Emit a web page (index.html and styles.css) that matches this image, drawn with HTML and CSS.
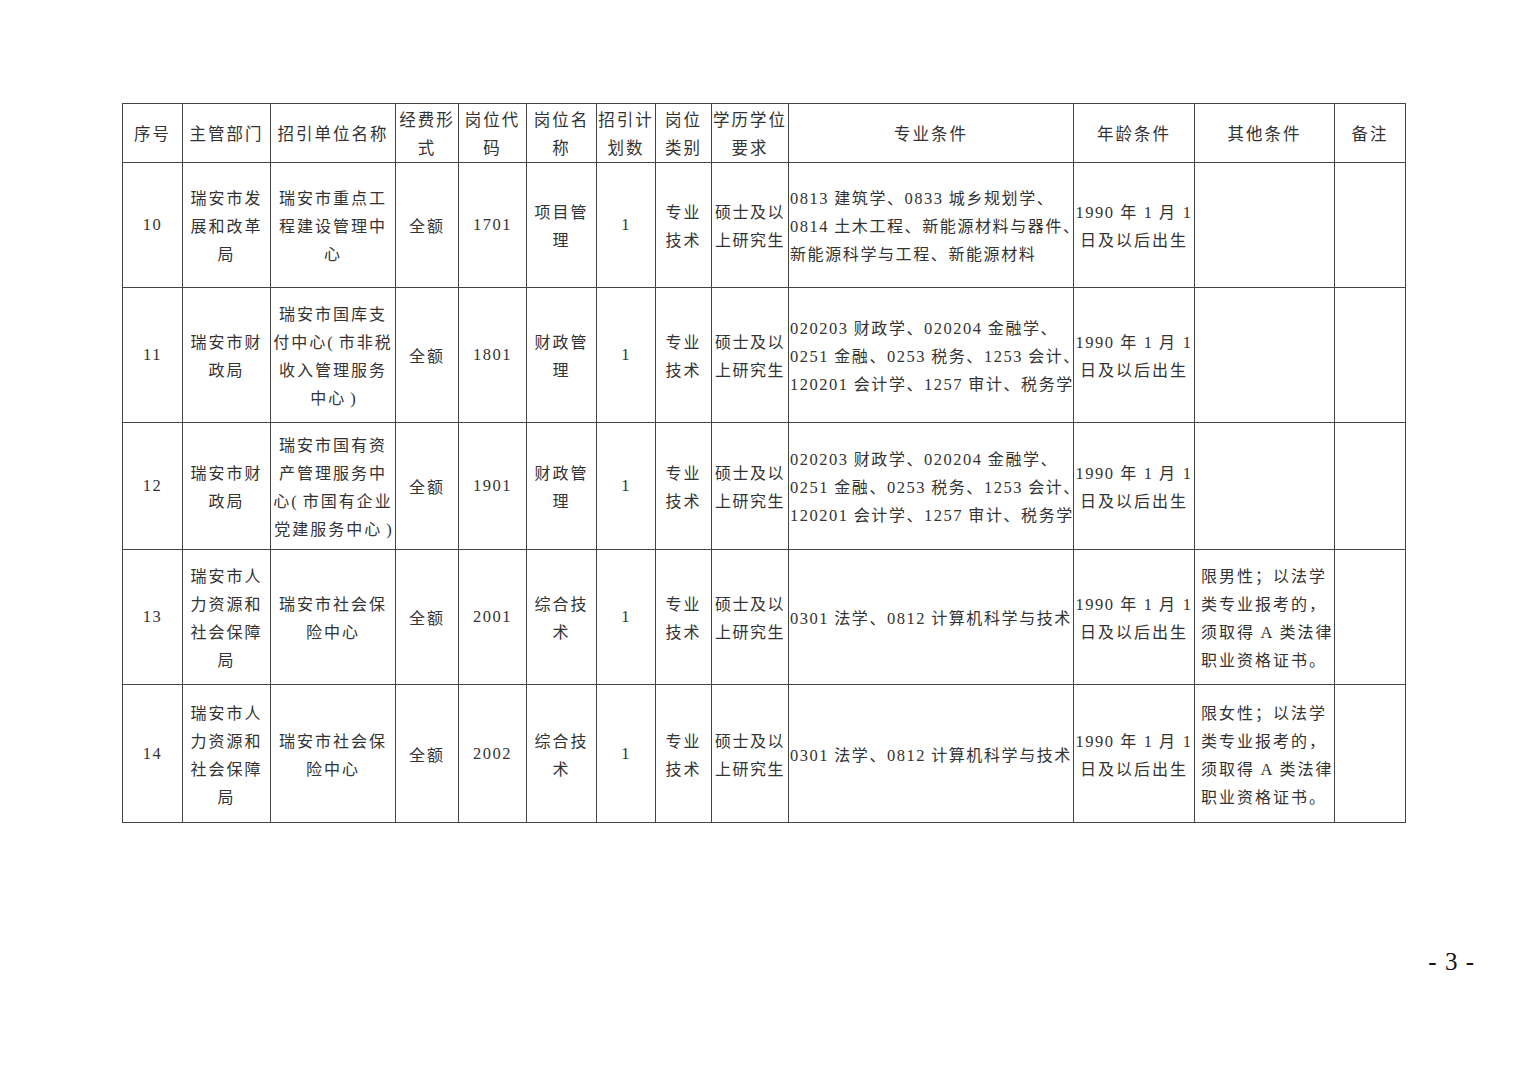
FILE: index.html
```html
<!DOCTYPE html>
<html lang="zh-CN">
<head>
<meta charset="utf-8">
<title>招聘岗位表</title>
<link rel="stylesheet" href="styles.css">
</head>
<body>
<div class="page">
<table class="jobs">
<colgroup>
<col class="c1"><col class="c2"><col class="c3"><col class="c4"><col class="c5"><col class="c6"><col class="c7"><col class="c8"><col class="c9"><col class="c10"><col class="c11"><col class="c12"><col class="c13">
</colgroup>
<thead>
<tr class="hrow">
<th>序号</th><th>主管部门</th><th>招引单位名称</th><th>经费形<br>式</th><th>岗位代<br>码</th><th>岗位名<br>称</th><th>招引计<br>划数</th><th>岗位<br>类别</th><th>学历学位<br>要求</th><th>专业条件</th><th>年龄条件</th><th>其他条件</th><th>备注</th>
</tr>
</thead>
<tbody>
<tr class="r1">
<td class="num">10</td>
<td>瑞安市发<br>展和改革<br>局</td>
<td>瑞安市重点工<br>程建设管理中<br>心</td>
<td>全额</td>
<td class="num">1701</td>
<td>项目管<br>理</td>
<td class="num">1</td>
<td>专业<br>技术</td>
<td class="edu">硕士及以<br>上研究生</td>
<td class="major"><span class="n">0813</span> 建筑学、<span class="n">0833</span> 城乡规划学、<br><span class="n">0814</span> 土木工程、新能源材料与器件、<br>新能源科学与工程、新能源材料</td>
<td class="age"><span class="n">1990</span> 年 <span class="n">1</span> 月 <span class="n">1</span><br>日及以后出生</td>
<td class="other"></td>
<td></td>
</tr>
<tr class="r2">
<td class="num">11</td>
<td>瑞安市财<br>政局</td>
<td>瑞安市国库支<br>付中心<span class="p">(</span>市非税<br>收入管理服务<br>中心<span class="p pr">)</span></td>
<td>全额</td>
<td class="num">1801</td>
<td>财政管<br>理</td>
<td class="num">1</td>
<td>专业<br>技术</td>
<td class="edu">硕士及以<br>上研究生</td>
<td class="major"><span class="n">020203</span> 财政学、<span class="n">020204</span> 金融学、<br><span class="n">0251</span> 金融、<span class="n">0253</span> 税务、<span class="n">1253</span> 会计、<br><span class="n">120201</span> 会计学、<span class="n">1257</span> 审计、税务学</td>
<td class="age"><span class="n">1990</span> 年 <span class="n">1</span> 月 <span class="n">1</span><br>日及以后出生</td>
<td class="other"></td>
<td></td>
</tr>
<tr class="r3">
<td class="num">12</td>
<td>瑞安市财<br>政局</td>
<td>瑞安市国有资<br>产管理服务中<br>心<span class="p">(</span>市国有企业<br>党建服务中心<span class="p pr">)</span></td>
<td>全额</td>
<td class="num">1901</td>
<td>财政管<br>理</td>
<td class="num">1</td>
<td>专业<br>技术</td>
<td class="edu">硕士及以<br>上研究生</td>
<td class="major"><span class="n">020203</span> 财政学、<span class="n">020204</span> 金融学、<br><span class="n">0251</span> 金融、<span class="n">0253</span> 税务、<span class="n">1253</span> 会计、<br><span class="n">120201</span> 会计学、<span class="n">1257</span> 审计、税务学</td>
<td class="age"><span class="n">1990</span> 年 <span class="n">1</span> 月 <span class="n">1</span><br>日及以后出生</td>
<td class="other"></td>
<td></td>
</tr>
<tr class="r4">
<td class="num">13</td>
<td>瑞安市人<br>力资源和<br>社会保障<br>局</td>
<td>瑞安市社会保<br>险中心</td>
<td>全额</td>
<td class="num">2001</td>
<td>综合技<br>术</td>
<td class="num">1</td>
<td>专业<br>技术</td>
<td class="edu">硕士及以<br>上研究生</td>
<td class="major"><span class="n">0301</span> 法学、<span class="n">0812</span> 计算机科学与技术</td>
<td class="age"><span class="n">1990</span> 年 <span class="n">1</span> 月 <span class="n">1</span><br>日及以后出生</td>
<td class="other">限男性；以法学<br>类专业报考的，<br>须取得 <span class="n">A</span> 类法律<br>职业资格证书。</td>
<td></td>
</tr>
<tr class="r5">
<td class="num">14</td>
<td>瑞安市人<br>力资源和<br>社会保障<br>局</td>
<td>瑞安市社会保<br>险中心</td>
<td>全额</td>
<td class="num">2002</td>
<td>综合技<br>术</td>
<td class="num">1</td>
<td>专业<br>技术</td>
<td class="edu">硕士及以<br>上研究生</td>
<td class="major"><span class="n">0301</span> 法学、<span class="n">0812</span> 计算机科学与技术</td>
<td class="age"><span class="n">1990</span> 年 <span class="n">1</span> 月 <span class="n">1</span><br>日及以后出生</td>
<td class="other">限女性；以法学<br>类专业报考的，<br>须取得 <span class="n">A</span> 类法律<br>职业资格证书。</td>
<td></td>
</tr>
</tbody>
</table>
<div class="pagenum">- 3 -</div>
</div>
</body>
</html>
```
FILE: styles.css
```css
html, body {
  margin: 0;
  padding: 0;
  background: #ffffff;
}
.page {
  width: 1527px;
  height: 1080px;
  box-sizing: border-box;
  padding: 103px 0 0 122px;
  font-family: "Liberation Serif", "Noto Sans CJK SC", serif;
  color: #333333;
}
.jobs {
  border-collapse: collapse;
  table-layout: fixed;
  width: 1284px;
  border: 1.5px solid #333;
  font-size: 16px;
  line-height: 28px;
  letter-spacing: 2px;
}
.jobs th, .jobs td {
  border: 1px solid #444;
  padding: 0 1px;
  text-align: center;
  vertical-align: middle;
  font-weight: normal;
  font-family: "Noto Sans CJK SC", serif;
  white-space: nowrap;
}
.jobs th {
  font-size: 16.5px;
}
.c1 { width: 60px; }
.c2 { width: 88px; }
.c3 { width: 125px; }
.c4 { width: 63px; }
.c5 { width: 68px; }
.c6 { width: 70px; }
.c7 { width: 59px; }
.c8 { width: 56px; }
.c9 { width: 77px; }
.c10 { width: 285px; }
.c11 { width: 121px; }
.c12 { width: 140px; }
.c13 { width: 71px; }
.hrow { height: 59px; }
.r1 { height: 125px; }
.r2 { height: 135px; }
.r3 { height: 127px; }
.r4 { height: 135px; }
.r5 { height: 138px; }
.jobs td.num, .jobs .n {
  font-family: "Liberation Serif", serif;
  font-size: 16.5px;
  letter-spacing: 1.5px;
}
.jobs .n, .jobs .p {
  line-height: 1;
}
.jobs .p {
  font-family: "Liberation Serif", serif;
  font-size: 16.5px;
  letter-spacing: 6px;
}
.jobs .pr {
  margin-left: 4px;
  letter-spacing: 0;
}
.jobs td.major {
  text-align: left;
  letter-spacing: 1.6px;
}
.jobs td.edu {
  letter-spacing: 1.5px;
}
.jobs td.other {
  text-align: left;
  padding-left: 6px;
}
.pagenum {
  width: 1353px;
  margin-top: 125px;
  text-align: right;
  font-family: "Liberation Serif", serif;
  font-size: 25px;
  color: #111;
  letter-spacing: 1px;
}
```
